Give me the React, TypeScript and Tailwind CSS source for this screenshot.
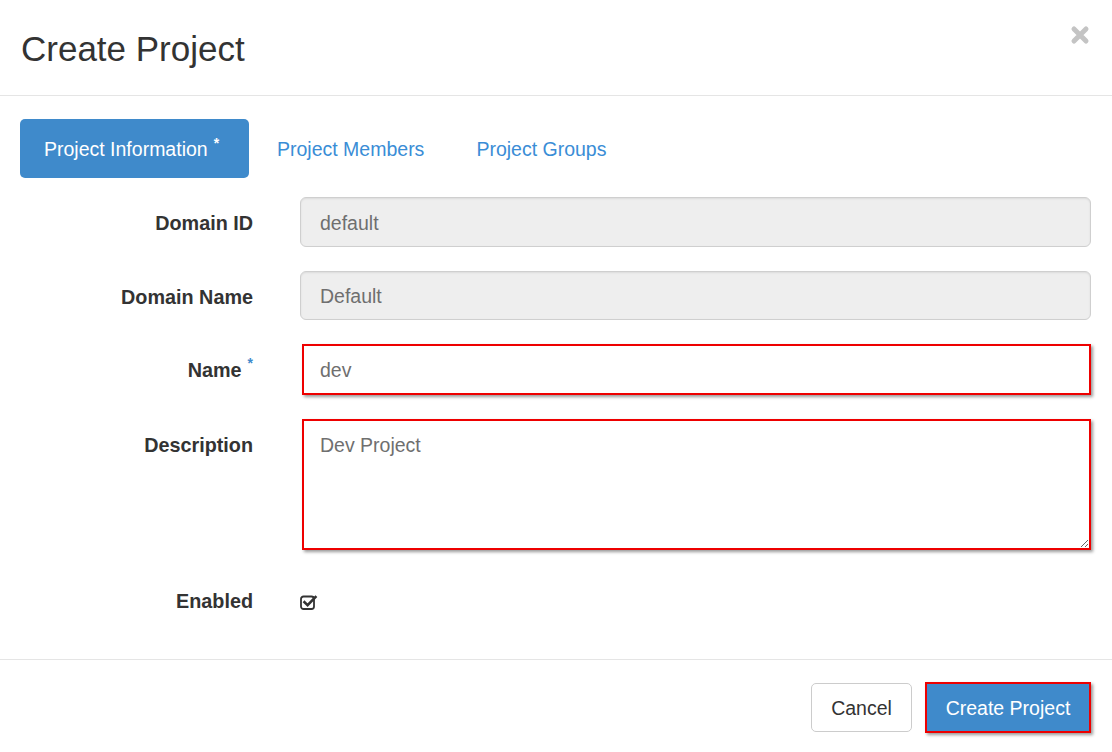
import React from "react";

const FONT = { fontFamily: '"Liberation Sans", Arial, sans-serif' };

function CloseIcon() {
  return (
    <svg width="20" height="20" viewBox="0 0 20 20" aria-hidden>
      <path d="M4 4 L16 16 M16 4 L4 16" stroke="#c4c4c4" strokeWidth="5" strokeLinecap="round" />
    </svg>
  );
}

function CheckSquareO() {
  // fa-check-square-o look-alike
  return (
    <svg width="18" height="16" viewBox="0 0 18 16" aria-hidden>
      <rect x="1" y="2.5" width="13" height="12.5" rx="2.5" fill="none" stroke="#333" strokeWidth="1.8" />
      <path d="M4.5 8.2 L7.6 11.2 L15.5 3" fill="none" stroke="#333" strokeWidth="2.6" strokeLinecap="square" />
    </svg>
  );
}

function Label({ text, required }: { text: string; required?: boolean }) {
  return (
    <div className="flex justify-end items-start pt-[15px] text-[19.8px] font-bold text-[#333] leading-[22px]">
      <span>{text}</span>
      {required && <span className="text-[#3f8acb] text-[14px] leading-none ml-[6px] -mt-[3px]">*</span>}
    </div>
  );
}

export default function App() {
  return (
    <div className="w-[1112px] h-[752px] bg-white overflow-hidden flex flex-col" style={FONT}>
      {/* header */}
      <div className="h-[96px] shrink-0 border-b border-[#e5e5e5] flex justify-between pl-[21px] pr-[22px]">
        <h4 className="text-[35px] text-[#333] leading-none mt-[31px]">Create Project</h4>
        <button className="self-start mt-[25px]">
          <CloseIcon />
        </button>
      </div>

      {/* body */}
      <div className="flex-1 pt-[23px] pl-[20px] pr-[21px]">
        <div className="flex items-center text-[19.5px]">
          <div className="h-[59px] w-[229px] rounded-[5px] bg-[#3f8acb] text-white flex items-center pl-[24px] pt-[3px]">
            <span>Project Information</span>
            <span className="text-[14px] font-bold ml-[6px] -mt-[14px]">*</span>
          </div>
          <span className="ml-[28px] pt-[3px] text-[#3a8dd6]">Project Members</span>
          <span className="ml-[52px] pt-[3px] text-[#3a8dd6]">Project Groups</span>
        </div>

        <div className="grid grid-cols-[233px_1fr] gap-x-[47px] gap-y-[24px] mt-[19px]">
          <Label text="Domain ID" />
          <div className="h-[50px] rounded-[6px] border border-[#cfcfcf] bg-[#eeeeee] shadow-[inset_0_1px_2px_rgba(0,0,0,0.08)] flex items-center px-[19px] pt-[3px] text-[19.5px] text-[#6f6f6f]">
            default
          </div>

          <Label text="Domain Name" />
          <div className="h-[49px] rounded-[6px] border border-[#cfcfcf] bg-[#eeeeee] shadow-[inset_0_1px_2px_rgba(0,0,0,0.08)] flex items-center px-[19px] pt-[2px] text-[19.5px] text-[#6f6f6f]">
            Default
          </div>

          <Label text="Name" required />
          <div className="h-[51px] ml-[2px] border-2 border-[#ee0000] bg-white shadow-[2px_2px_3px_rgba(0,0,0,0.4)] flex items-center px-[16px] pt-[2px] text-[19.5px] text-[#6f6f6f]">
            dev
          </div>

          <Label text="Description" />
          <textarea
            readOnly
            defaultValue="Dev Project"
            className="h-[131px] ml-[2px] border-2 border-[#ee0000] bg-white shadow-[2px_2px_3px_rgba(0,0,0,0.4)] px-[16px] pt-[12px] text-[19.5px] leading-[24px] text-[#6f6f6f] outline-none resize"
            style={FONT}
          />

          <div className="h-[56px] flex items-center justify-end text-[19.8px] font-bold text-[#333]">Enabled</div>
          <div className="h-[56px] flex items-center">
            <CheckSquareO />
          </div>
        </div>
      </div>

      {/* footer */}
      <div className="h-[93px] shrink-0 border-t border-[#e5e5e5] flex justify-end items-start gap-[13px] pt-[23px] pr-[21px]">
        <button className="h-[49px] w-[101px] rounded-[5px] border border-[#cccccc] bg-white text-[19.5px] text-[#333] pt-[2px]" style={FONT}>
          Cancel
        </button>
        <button className="h-[51px] w-[166px] -mt-[1px] border-2 border-[#ee0000] bg-[#3f8acb] text-[19.5px] text-white pt-[2px] shadow-[2px_2px_3px_rgba(0,0,0,0.4)]" style={FONT}>
          Create Project
        </button>
      </div>
    </div>
  );
}
